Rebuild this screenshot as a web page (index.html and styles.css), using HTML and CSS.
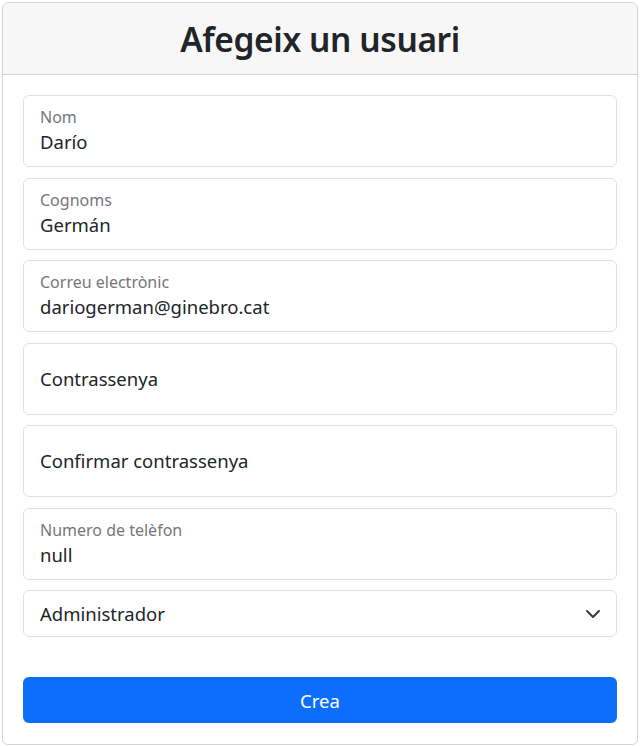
FILE: index.html
```html
<!DOCTYPE html>
<html lang="ca">
<head>
<meta charset="utf-8">
<link rel="stylesheet" href="styles.css">
</head>
<body>
<div class="card">
  <div class="card-header"><h1 class="title">Afegeix un usuari</h1></div>
  <div class="card-body">
    <div class="field filled"><span class="label">Nom</span><span class="value">Darío</span></div>
    <div class="field filled"><span class="label">Cognoms</span><span class="value">Germán</span></div>
    <div class="field filled"><span class="label">Correu electrònic</span><span class="value">dariogerman@ginebro.cat</span></div>
    <div class="field empty"><span class="placeholder">Contrassenya</span></div>
    <div class="field empty"><span class="placeholder">Confirmar contrassenya</span></div>
    <div class="field filled"><span class="label">Numero de telèfon</span><span class="value">null</span></div>
    <div class="select"><span class="value">Administrador</span>
      <svg class="chevron" width="16" height="16" viewBox="0 0 16 16"><path d="M2 5l6 6 6-6" fill="none" stroke="#343a40" stroke-width="2" stroke-linecap="round" stroke-linejoin="round"/></svg>
    </div>
    <button class="btn">Crea</button>
  </div>
</div>
</body>
</html>
```
FILE: styles.css
```css
* { box-sizing: border-box; }
html, body { margin: 0; padding: 0; background: #fff; }
body {
  font-family: "Noto Sans", "Open Sans", sans-serif;
  color: #212529;
  padding: 2px 4px 1px 2px;
}
.card {
  border: 1px solid #d3d3d3;
  border-radius: 6px;
  overflow: hidden;
  height: 743px;
  display: flex;
  flex-direction: column;
}
.card-header {
  background: #f7f7f7;
  border-bottom: 1px solid #cfcfcf;
  height: 72px;
  display: flex;
  align-items: center;
  justify-content: center;
}
.title {
  margin: 0;
  font-size: 33.5px;
  font-weight: 600;
  letter-spacing: -0.4px;
  color: #212529;
}
.card-body {
  padding: 20px 20px 21px 20px;
  display: flex;
  flex-direction: column;
  flex: 1;
}
.field {
  height: 72px;
  border: 1px solid #dee2e6;
  border-radius: 6px;
  padding: 0 16px;
  display: flex;
  flex-direction: column;
  margin-bottom: 10.5px;
}
.field.filled { padding-top: 10px; }
.field.empty { justify-content: center; }
.label {
  font-size: 16px;
  color: #74777a;
  line-height: 23px;
}
.value, .placeholder {
  font-size: 18.5px;
  line-height: 26px;
  color: #212529;
}
.select {
  height: 47px;
  border: 1px solid #dee2e6;
  border-radius: 6px;
  padding: 0 16px;
  display: flex;
  align-items: center;
  justify-content: space-between;
}
.chevron { margin-right: -1px; }
.btn {
  margin-top: auto;
  height: 46px;
  border: none;
  border-radius: 6px;
  background: #0d6efd;
  color: #fff;
  font-family: inherit;
  font-size: 18.5px;
  cursor: pointer;
}
```
